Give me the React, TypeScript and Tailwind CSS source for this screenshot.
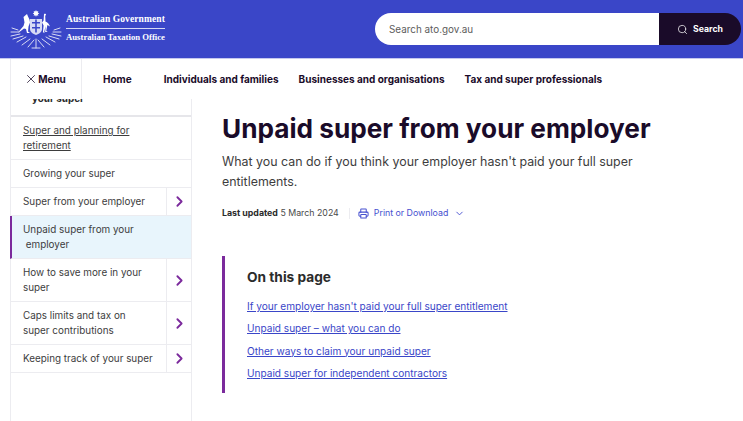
import { Search, Printer, ChevronDown, ChevronRight, X } from "lucide-react";

function Crest() {
  return (
    <svg width="52" height="40" viewBox="0 0 52 40" fill="none" className="shrink-0">
      <g fill="#fff">
        <path d="M26 1l.8 1.500 1.600-.5-.6 1.600 1.500.8-1.500.8.6 1.600-1.600-.5-.8 1.500-.8-1.500-1.600.5.600-1.600-1.500-.8 1.500-.8-.6-1.600 1.600.5z" />
        <path d="M17 5l1 2.500 1.500 3 .5 3-1.500 4-.5 5 2 1.500h-3l-1-4-2-.5-4 3-2 1 2.500-3 3-3.500 1-3.500-.5-3-.5-2.500z" />
        <path d="M34 5c1.200-.8 2.400 0 2 1.200l-.8.3.3 6c2 .8 3.600 2.500 4.500 5l-2.600-1.500-1.200 6 1.600 1h-2.600l.4-6-1.400 6 1 .5h-2.300l.7-7-1.600-3 1.600-2z" />
        <path d="M20 10h12v10c0 3-3 5-6 6-3-1-6-3-6-6z" opacity=".8" />
      </g>
      <g stroke="#fff" strokeWidth="1" strokeLinecap="round" opacity=".8">
        <path d="M1 23l8 0M2 19l6 2M1 27l9-2M3 30l10-3M7 33l9-5M12 36l8-6M18 38l6-7" />
        <path d="M51 23l-8 0M50 19l-6 2M51 27l-9-2M49 30l-10-3M45 33l-9-5M40 36l-8-6M34 38l-6-7" />
        <path d="M26 30v9M22 39h8" />
      </g>
      <g fill="#3a46c8">
        <path d="M22 13h8v1.500h-8zM22 18h8v1.500h-8zM25.200 10.500h1.600v13h-1.600z" />
      </g>
    </svg>
  );
}

type Row = { label: string[]; arrow?: boolean; underline?: boolean; active?: boolean };

const rows: Row[] = [
  { label: ["Super and planning for", "retirement"], underline: true },
  { label: ["Growing your super"] },
  { label: ["Super from your employer"], arrow: true },
  { label: ["Unpaid super from your", "\u00a0employer"], active: true },
  { label: ["How to save more in your", "super"], arrow: true },
  { label: ["Caps limits and tax on", "super contributions"], arrow: true },
  { label: ["Keeping track of your super"], arrow: true },
];

const links = [
  "If your employer hasn't paid your full super entitlement",
  "Unpaid super – what you can do",
  "Other ways to claim your unpaid super",
  "Unpaid super for independent contractors",
];

export default function App() {
  return (
    <div className="h-[421px] w-[743px] overflow-hidden bg-white font-['Inter',sans-serif] text-[#2b2b2b]">
      <header className="flex h-[59px] items-center justify-between border-b border-[#c5c8ee] bg-[#3a46c8] pl-[10px] pr-[2px]">
        <div className="flex items-center gap-[4px] pb-[1px]">
          <Crest />
          <div className="font-['Liberation_Serif',serif] font-bold leading-none text-white">
            <div className="border-b border-[#d5d8f5] pb-[3px] text-[9.5px] tracking-[0.1px]">Australian Government</div>
            <div className="pt-[4px] text-[8.700px]">Australian Taxation Office</div>
          </div>
        </div>
        <div className="flex h-[32px] w-[366px] overflow-hidden rounded-full">
          <div className="flex flex-1 items-center bg-white pl-[14px] text-[9.900px] text-[#5c5c5c]">Search ato.gov.au</div>
          <div className="flex w-[82px] items-center justify-center gap-[5px] bg-[#1a0b29] text-[8.700px] font-bold leading-[11px] text-white">
            <Search size={11} strokeWidth={1.6} />
            <span>Search</span>
          </div>
        </div>
      </header>

      <nav className="relative z-10 flex h-[40px] bg-white pl-[10px] text-[10px] font-bold text-[#1a0b29]">
        <div className="flex w-[72px] items-center justify-center gap-0 border-x border-[#ececf0] pr-[2px]">
          <X size={14} strokeWidth={1.3} />
          Menu
        </div>
        <div className="flex items-center gap-[20px] pl-[21px]">
          <span className="mr-[12px]">Home</span>
          <span>Individuals and families</span>
          <span>Businesses and organisations</span>
          <span>Tax and super professionals</span>
        </div>
      </nav>

      <div className="flex">
        <aside className="ml-[10px] h-[322px] w-[182px] shrink-0 border-x border-[#ececf0] text-[9.900px] leading-[15px] text-[#3d3d3d]">
          <div className="h-[18px] overflow-hidden border-b-[2px] border-[#e6e6ea] pl-[21px] font-bold leading-[14px] text-[#2b2b2b]">
            <div className="-mt-[8px]">your super</div>
          </div>
          {rows.map((r, i) => (
            <div
              key={i}
              className={`flex items-stretch border-b border-[#ececf0] ${r.active ? "-ml-[1px] border-l-2 border-l-[#7b2a9c] bg-[#e8f5fc]" : ""}`}
            >
              <div className={`flex-1 py-[6px] ${r.active ? "pl-[11px]" : "pl-[12px]"}`}>
                {r.label.map((l) => (
                  <div key={l} className={r.underline ? "underline" : ""}>{l}</div>
                ))}
              </div>
              {r.arrow && (
                <div className="flex w-[25px] items-center justify-center border-l border-[#ececf0] text-[#7b2a9c]">
                  <ChevronRight size={17} strokeWidth={2.6} />
                </div>
              )}
            </div>
          ))}
        </aside>

        <main className="flex-1 pl-[30px] pr-[90px]">
          <h1 className="whitespace-nowrap pt-[14px] text-[26.200px] font-bold leading-[32px] text-[#1a0b29]">Unpaid super from your employer</h1>
          <p className="mt-[7px] text-[12.400px] leading-[20px] text-[#3d3d3d]">
            What you can do if you think your employer hasn't paid your full super entitlements.
          </p>
          <div className="mt-[14px] flex items-center text-[8.800px] leading-[14px]">
            <span><b className="font-bold">Last updated</b> <span className="text-[#4a4a4a]">5 March 2024</span></span>
            <div className="ml-[10px] mr-[8px] h-[11px] w-px bg-[#ececf0]" />
            <span className="flex items-center gap-[5px] text-[#4650d0]">
              <Printer size={11} strokeWidth={2.2} />
              Print or Download
              <ChevronDown size={11} strokeWidth={2} className="ml-[1px]" />
            </span>
          </div>
          <section className="mt-[36px] h-[137px] border-l-[3px] border-[#7b2a9c] pl-[22px] pt-[11px]">
            <h2 className="text-[13.700px] font-bold leading-[20px] text-[#2b2b2b]">On this page</h2>
            <ul className="mt-[12px] space-y-[7.300px] text-[10.080px] leading-[15px] text-[#3a46c8] underline">
              {links.map((l) => (
                <li key={l}>{l}</li>
              ))}
            </ul>
          </section>
        </main>
      </div>
    </div>
  );
}
